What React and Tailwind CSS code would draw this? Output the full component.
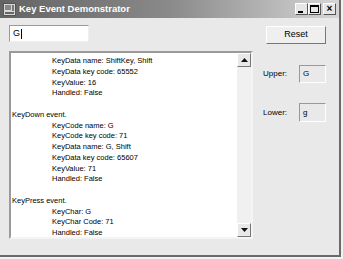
import React from 'react';

const lines = [
  { t: 'KeyData name: ShiftKey, Shift', i: true },
  { t: 'KeyData key code: 65552', i: true },
  { t: 'KeyValue: 16', i: true },
  { t: 'Handled: False', i: true },
  { t: '' },
  { t: 'KeyDown event.' },
  { t: 'KeyCode name: G', i: true },
  { t: 'KeyCode key code: 71', i: true },
  { t: 'KeyData name: G, Shift', i: true },
  { t: 'KeyData key code: 65607', i: true },
  { t: 'KeyValue: 71', i: true },
  { t: 'Handled: False', i: true },
  { t: '' },
  { t: 'KeyPress event.' },
  { t: 'KeyChar: G', i: true },
  { t: 'KeyChar Code: 71', i: true },
  { t: 'Handled: False', i: true },
];

const font = { fontFamily: '"Liberation Sans", Arial, sans-serif' };

const CtlBtn = ({ children }) => (
  <div className="w-[13px] h-[12px] bg-[#e6e6e6] border border-t-white border-l-white border-r-[#555] border-b-[#555] flex items-center justify-center">
    {children}
  </div>
);

const ArrowBtn = ({ up }) => (
  <div className="w-[14px] h-[14px] bg-[#e8e8e8] border border-t-white border-l-white border-r-[#777] border-b-[#777] flex items-center justify-center">
    <svg width="7" height="4" viewBox="0 0 7 4">
      {up ? <path d="M3.5 0 L7 4 L0 4 Z" fill="#111" /> : <path d="M0 0 L7 0 L3.5 4 Z" fill="#111" />}
    </svg>
  </div>
);

export default function App() {
  return (
    <div className="w-[343px] h-[259px] bg-[#f2f2f2]" style={font}>
      <div className="w-[341px] h-[257px] bg-[#e9e9e9] border-r-2 border-b-2 border-[#6a6a6a] flex flex-col">
        {/* title bar */}
        <div className="h-[18px] flex items-center bg-gradient-to-r from-[#646464] via-[#8a8a8a] to-[#d6d6d6] pl-[3px] pr-[3px]">
          <svg width="13" height="13" viewBox="0 0 13 13" className="shrink-0">
            <rect x="0.5" y="0.5" width="12" height="12" fill="#d8d8d8" stroke="#555" />
            <rect x="2" y="2" width="6" height="5" fill="#888" />
            <rect x="2" y="9" width="9" height="2" fill="#666" />
            <rect x="9" y="2" width="2" height="6" fill="#777" />
          </svg>
          <span className="ml-[3px] text-white font-bold text-[9.5px] leading-none">Key Event Demonstrator</span>
          <div className="ml-auto flex items-center">
            <CtlBtn>
              <div className="w-[5px] h-[2px] bg-black mt-[6px] mr-[2px]" />
            </CtlBtn>
            <CtlBtn>
              <div className="w-[9px] h-[8px] border border-black border-t-2" />
            </CtlBtn>
            <div className="w-[2px]" />
            <CtlBtn>
              <span className="text-[10px] font-bold leading-none text-black">×</span>
            </CtlBtn>
          </div>
        </div>

        <div className="pl-[9px] pr-[13px] flex flex-col">
          {/* top row */}
          <div className="flex items-start justify-between">
            <div className="mt-[7px] w-[80px] h-[17px] bg-white border border-t-[#999] border-l-[#999] border-r-[#eee] border-b-[#eee] flex items-center pl-[3px] text-[9px] text-black">
              G<span className="w-px h-[10px] bg-black ml-px" />
            </div>
            <div className="mt-[8px] w-[60px] h-[18px] bg-[#efefef] border border-t-white border-l-white border-r-[#777] border-b-[#777] flex items-center justify-center text-[9px] text-black">
              Reset
            </div>
          </div>

          {/* main row */}
          <div className="flex items-start mt-[7px]">
            <div className="w-[245px] h-[188px] bg-white border-2 border-t-[#9a9a9a] border-l-[#9a9a9a] border-r-[#f4f4f4] border-b-[#f4f4f4] flex overflow-hidden">
              <div className="flex-1 pl-[1px] pt-[3px] text-[7.5px] leading-[10.75px] text-black">
                {lines.map((l, k) => (
                  <div key={k} className={l.i ? 'pl-[40px] h-[10.75px]' : 'h-[10.75px]'}>
                    {l.t}
                  </div>
                ))}
              </div>
              <div className="w-[14px] bg-[#f0f0f0] flex flex-col justify-between">
                <ArrowBtn up />
                <ArrowBtn />
              </div>
            </div>

            <div className="ml-[10px] mt-[14px] flex flex-col gap-[20px] text-[8px] text-black">
              <div className="flex items-center">
                <span className="w-[36px]">Upper:</span>
                <div className="w-[27px] h-[18px] border border-t-[#999] border-l-[#999] border-r-white border-b-white flex items-center pl-[3px]">G</div>
              </div>
              <div className="flex items-center">
                <span className="w-[36px]">Lower:</span>
                <div className="w-[27px] h-[19px] border border-t-[#999] border-l-[#999] border-r-white border-b-white flex items-center pl-[3px]">g</div>
              </div>
            </div>
          </div>
        </div>
      </div>
    </div>
  );
}
